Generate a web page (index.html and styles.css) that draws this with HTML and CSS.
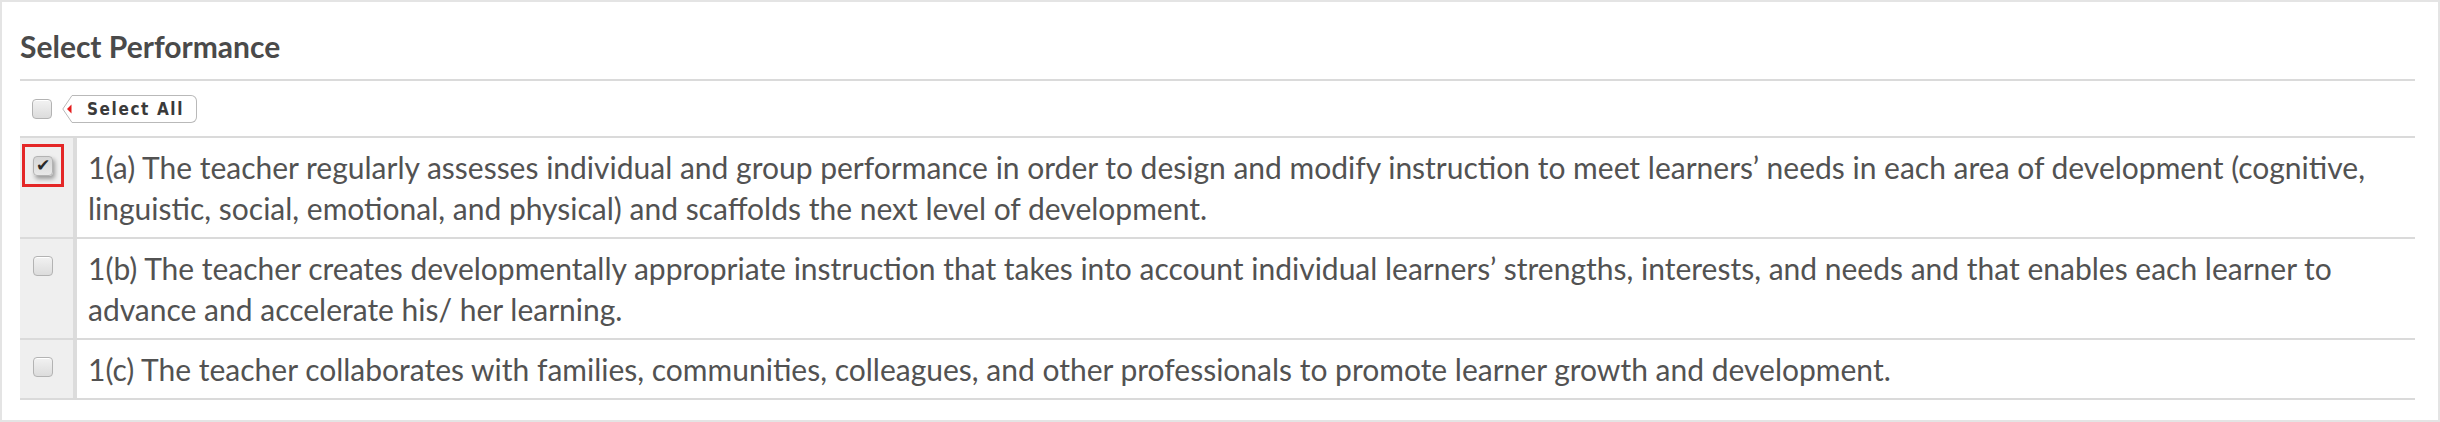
FILE: index.html
```html
<!DOCTYPE html>
<html lang="en">
<head>
    <meta charset="UTF-8">
    <title>Select Performance</title>
    <link rel="stylesheet" href="styles.css">
</head>
<body>
    <div class="panel">
        <h2 class="panel-title">Select Performance</h2>

        <!-- Select all -->
        <div class="select-all-row">
            <span class="cb"></span>
            <button class="tag-btn" type="button">
                <svg class="tag-point" width="11" height="28" viewBox="0 0 11 28">
                    <path d="M11 0.5 L10 0.5 L0.8 14 L10 27.5 L11 27.5" fill="#fff" stroke="#b9b9b9" stroke-width="1"/>
                    <path d="M5 14 L9.5 9.5 L9.5 18.5 Z" fill="#e41b1b"/>
                </svg>
                <span class="tag-label">Select All</span>
            </button>
        </div>

        <!-- Performance list -->
        <div class="perf-list">
            <div class="perf-row">
                <div class="perf-check">
                    <span class="cb-wrap highlight"><span class="cb checked">&#10004;</span></span>
                </div>
                <div class="perf-text">1(a) The teacher regularly assesses individual and group performance in order to design and modify instruction to meet learners’ needs in each area of development (cognitive, linguistic, social, emotional, and physical) and scaffolds the next level of development.</div>
            </div>
            <div class="perf-row">
                <div class="perf-check">
                    <span class="cb-wrap"><span class="cb"></span></span>
                </div>
                <div class="perf-text">1(b) The teacher creates developmentally appropriate instruction that takes into account individual learners’ strengths, interests, and needs and that enables each learner to advance and accelerate his/ her learning.</div>
            </div>
            <div class="perf-row">
                <div class="perf-check">
                    <span class="cb-wrap"><span class="cb"></span></span>
                </div>
                <div class="perf-text">1(c) The teacher collaborates with families, communities, colleagues, and other professionals to promote learner growth and development.</div>
            </div>
        </div>
    </div>
</body>
</html>
```

FILE: styles.css
```css
/* General */
body {
    margin: 0;
    font-family: Lato, "Open Sans", sans-serif;
    color: #525252;
    background: #fff;
}

.panel {
    box-sizing: border-box;
    width: 2440px;
    height: 422px;
    border: 2px solid #e4e4e4;
    padding: 27px 23px 0 18px;
}

.panel-title {
    margin: 0;
    font-size: 30px;
    font-weight: 700;
    line-height: 34px;
    color: #4a4a4a;
    padding-bottom: 16px;
    border-bottom: 2px solid #dadada;
}

/* Checkboxes */
.cb {
    box-sizing: border-box;
    display: inline-flex;
    align-items: center;
    justify-content: center;
    width: 20px;
    height: 20px;
    border: 1px solid #b3b3b3;
    border-radius: 4px;
    background: linear-gradient(#f2f2f2, #dcdcdc);
    box-shadow: inset 0 1px 0 #fff;
    font-family: "DejaVu Sans", sans-serif;
    font-size: 17px;
    line-height: 1;
    color: #2a2a2a;
}

.cb.checked {
    background: linear-gradient(#d6d6d6, #e8e8e8);
    box-shadow: 2px 3px 4px rgba(0, 0, 0, 0.35);
}

.cb-wrap {
    display: inline-block;
    padding: 8px;
    border: 3px solid transparent;
}

.cb-wrap.highlight {
    border-color: #e42727;
}

/* Select all row */
.select-all-row {
    display: flex;
    align-items: center;
    gap: 10px;
    height: 55px;
    padding-left: 12px;
    border-bottom: 2px solid #dadada;
}

.tag-btn {
    display: flex;
    align-items: stretch;
    height: 28px;
    padding: 0;
    margin: 0;
    border: none;
    background: none;
    cursor: pointer;
}

.tag-point {
    display: block;
}

.tag-label {
    display: flex;
    align-items: center;
    padding: 0 12px 0 14px;
    border: 1px solid #b9b9b9;
    border-left: none;
    border-radius: 0 6px 6px 0;
    background: #fff;
    font-family: "DejaVu Sans Condensed", "DejaVu Sans", sans-serif;
    font-weight: bold;
    font-size: 17px;
    letter-spacing: 1.6px;
    color: #3a3a3a;
}

/* Performance rows */
.perf-row {
    display: flex;
    border-bottom: 2px solid #dadada;
}

.perf-check {
    flex: 0 0 51px;
    background: #efefef;
    border-right: 4px solid #dcdcdc;
    padding: 6px 0 0 2px;
}

.perf-text {
    flex: 1;
    padding: 9px 0 8px 11px;
    font-size: 30px;
    line-height: 41px;
}
```
